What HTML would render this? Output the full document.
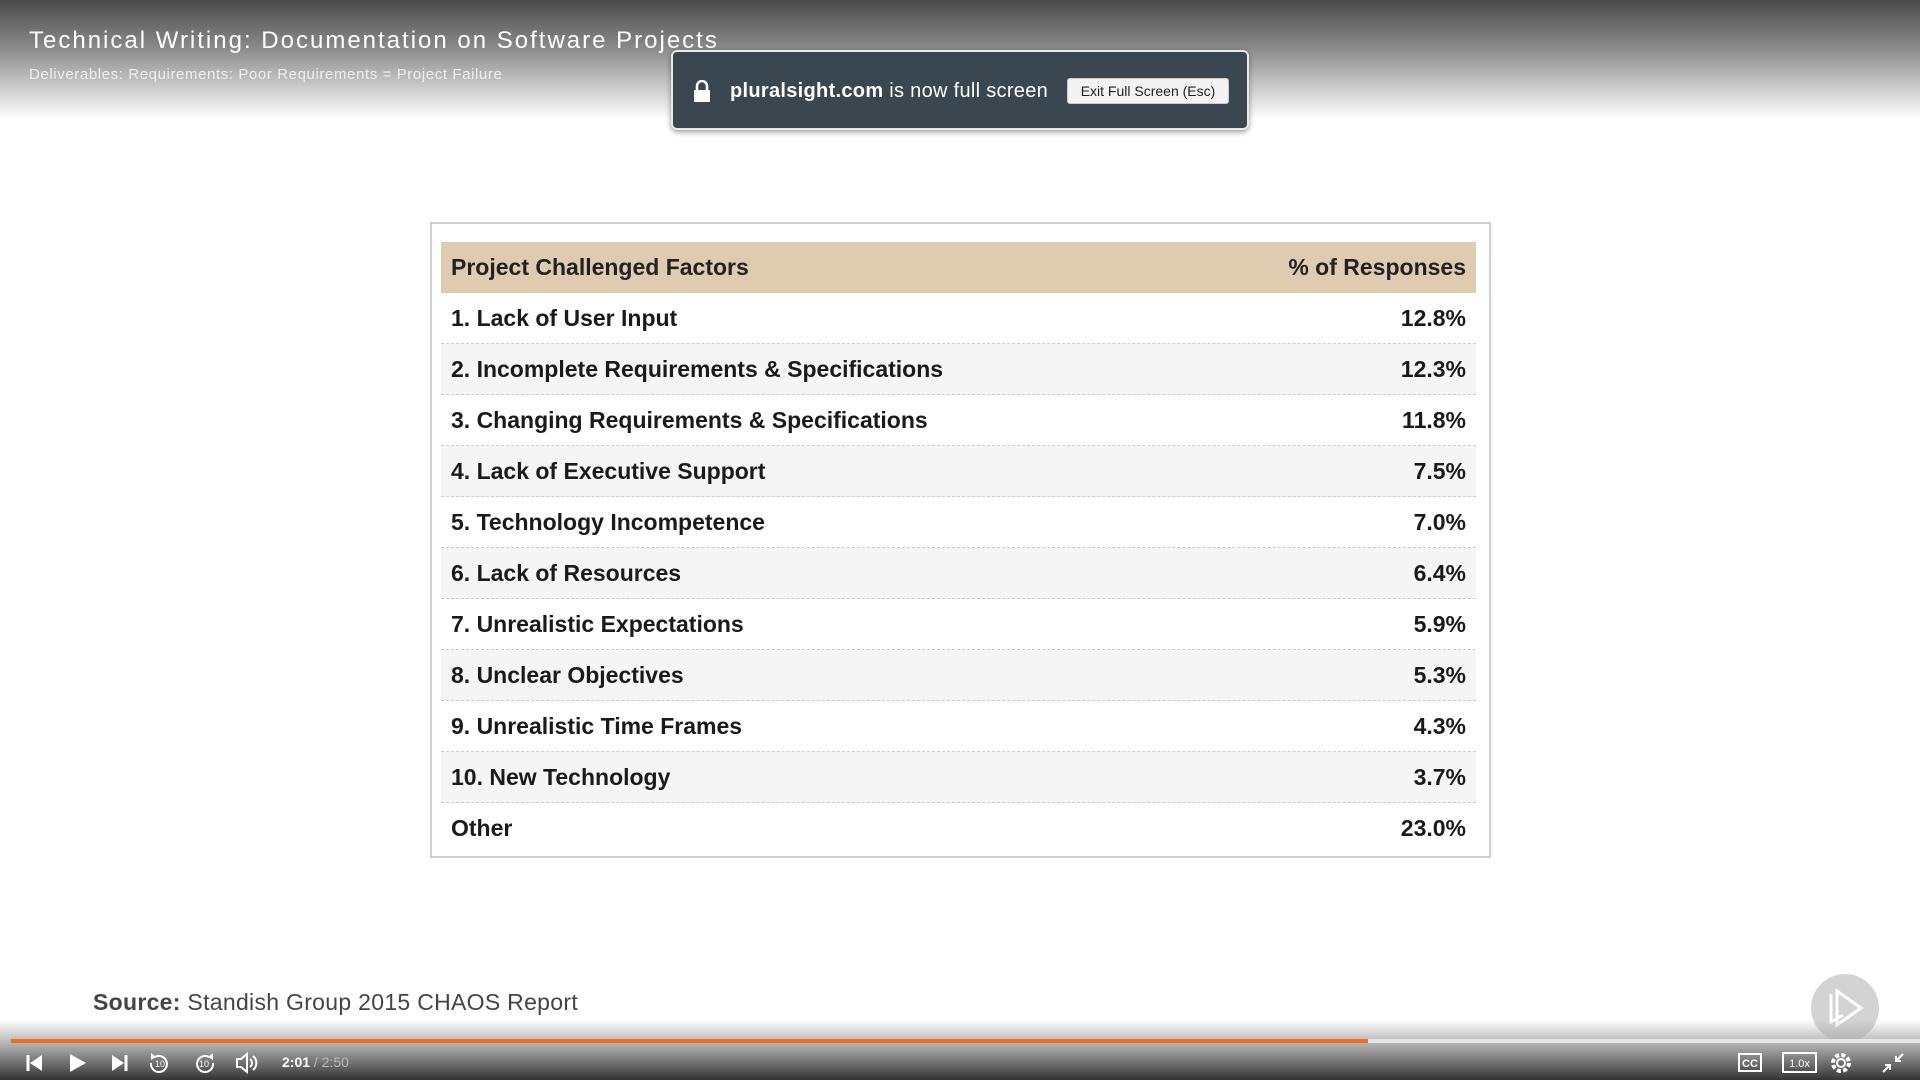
<!DOCTYPE html>
<html><head><meta charset="utf-8"><style>
*{margin:0;padding:0;box-sizing:border-box}
body{width:1920px;height:1080px;position:relative;overflow:hidden;background:#fff;font-family:"Liberation Sans",sans-serif}
.top{position:absolute;left:0;top:0;width:1920px;height:120px;background:linear-gradient(#4b4b4b,#8a8a8a 40%,#d0d0d0 75%,#fff)}
.title{position:absolute;left:29px;top:27px;color:#fff;font-size:24px;letter-spacing:2px}
.sub{position:absolute;left:29px;top:66px;color:#eee;font-size:15px;letter-spacing:0.6px}
.pop{position:absolute;left:671px;top:50px;width:578px;height:80px;background:#3a4650;border:2px solid #e8e8e8;border-radius:6px;box-shadow:0 2px 6px rgba(0,0,0,.4);color:#fff}
.pop .t{position:absolute;left:57px;top:28px;font-size:20px;letter-spacing:0.3px}
.pop .b{position:absolute;left:394px;top:26px;width:162px;height:26px;background:#f3f3f3;border:1px solid #ccc;border-radius:3px;color:#222;font-size:14px;text-align:center;line-height:24px}
.tbl{position:absolute;left:430px;top:222px;width:1061px;height:636px;border:2px solid #cfcfcf}
.row{position:absolute;left:9px;width:1035px;height:51px;font-size:23px;font-weight:bold;color:#1a1a1a;line-height:51px;border-bottom:1px dashed #ccc}
.row span{position:absolute;left:10px}
.row b{position:absolute;right:10px}
.hd{background:#dfcbb0;border:none;color:#222}
.alt{background:#f5f5f5}
.src{position:absolute;left:93px;top:989px;font-size:23px;color:#444;letter-spacing:0.3px}
.bot{position:absolute;left:0;top:1020px;width:1920px;height:60px;background:linear-gradient(rgba(255,255,255,0),#a8a8a8 45%,#333)}
.prog{position:absolute;left:11px;top:1039px;width:1909px;height:4px;background:#e6e6e6}
.prog div{width:1357px;height:4px;background:#f26b1d}
.ctl{position:absolute;top:1048px}
.time{position:absolute;left:282px;top:1054px;font-size:14px;color:#fff}
.logo{position:absolute;left:1811px;top:974px;width:68px;height:68px;border-radius:50%;background:rgba(200,200,200,.8)}
</style></head><body>
<div class="top"></div>
<div class="title">Technical Writing: Documentation on Software Projects</div>
<div class="sub">Deliverables: Requirements: Poor Requirements = Project Failure</div>
<div class="pop">
<svg style="position:absolute;left:20px;top:28px" width="18" height="22" viewBox="0 0 18 22"><path d="M4 10V6a5 5 0 0 1 10 0v4" stroke="#fff" stroke-width="2.5" fill="none"/><rect x="1" y="10" width="16" height="12" rx="1" fill="#fff"/></svg>
<div class="t"><b>pluralsight.com</b> is now full screen</div>
<div class="b">Exit Full Screen (Esc)</div>
</div>
<div class="tbl">
<div class="row hd" style="top:18px"><span>Project Challenged Factors</span><b>% of Responses</b></div>
<div class="row" style="top:69px"><span>1. Lack of User Input</span><b>12.8%</b></div>
<div class="row alt" style="top:120px"><span>2. Incomplete Requirements &amp; Specifications</span><b>12.3%</b></div>
<div class="row" style="top:171px"><span>3. Changing Requirements &amp; Specifications</span><b>11.8%</b></div>
<div class="row alt" style="top:222px"><span>4. Lack of Executive Support</span><b>7.5%</b></div>
<div class="row" style="top:273px"><span>5. Technology Incompetence</span><b>7.0%</b></div>
<div class="row alt" style="top:324px"><span>6. Lack of Resources</span><b>6.4%</b></div>
<div class="row" style="top:375px"><span>7. Unrealistic Expectations</span><b>5.9%</b></div>
<div class="row alt" style="top:426px"><span>8. Unclear Objectives</span><b>5.3%</b></div>
<div class="row" style="top:477px"><span>9. Unrealistic Time Frames</span><b>4.3%</b></div>
<div class="row alt" style="top:528px"><span>10. New Technology</span><b>3.7%</b></div>
<div class="row" style="top:579px;border:none"><span>Other</span><b>23.0%</b></div>
</div>
<div class="src"><b>Source:</b> Standish Group 2015 CHAOS Report</div>
<div class="logo"><svg width="68" height="68" viewBox="0 0 68 68"><path d="M20 20v28l12-7M26 17v34l24-17z" stroke="#fff" stroke-width="3" fill="none"/></svg></div>
<div class="bot"></div>
<div class="prog"><div></div></div>
<svg class="ctl" style="left:0" width="320" height="30" viewBox="0 0 320 30">
<g fill="#fff" stroke="#fff">
<path d="M28 7v16" stroke-width="3"/><path d="M42 7v16L30 15z" stroke="none"/>
<path d="M70 6v18l16-9z" stroke="none"/>
<path d="M112 7v16l12-8z" stroke="none"/><path d="M126 7v16" stroke-width="3"/>
<path d="M155 9a8 8 0 1 1-4 6" fill="none" stroke-width="2"/><path d="M151 5l5 4-5 3z" stroke="none"/>
<text x="160" y="19" font-size="9" font-family="Liberation Sans" stroke="none" text-anchor="middle">10</text>
<path d="M209 9a8 8 0 1 0 4 6" fill="none" stroke-width="2"/><path d="M213 5l-5 4 5 3z" stroke="none"/>
<text x="204" y="19" font-size="9" font-family="Liberation Sans" stroke="none" text-anchor="middle">10</text>
<path d="M237 11h4l6-5v18l-6-5h-4z" fill="none" stroke-width="2"/><path d="M250 11a5 5 0 0 1 0 8M253 8a9 9 0 0 1 0 14" fill="none" stroke-width="2"/>
</g></svg>
<div class="time"><b>2:01</b> <span style="color:#bbb">/ 2:50</span></div>
<svg class="ctl" style="left:1730px" width="190" height="30" viewBox="0 0 190 30">
<g fill="none" stroke="#fff" stroke-width="2">
<rect x="9" y="6" width="22" height="17"/>
<rect x="53" y="5" width="33" height="19"/>
<circle cx="111" cy="15" r="4"/><circle cx="111" cy="15" r="8" stroke-dasharray="4 2.3" stroke-width="4"/>
<path d="M153 24l7-7M155 17h5v5M173 6l-7 7M166 8v5h5"/>
</g>
<text x="20" y="19" fill="#fff" font-size="11" font-weight="bold" font-family="Liberation Sans" text-anchor="middle">CC</text>
<text x="69.5" y="19" fill="#fff" font-size="11" font-family="Liberation Sans" text-anchor="middle">1.0x</text>
</svg>
</body></html>
